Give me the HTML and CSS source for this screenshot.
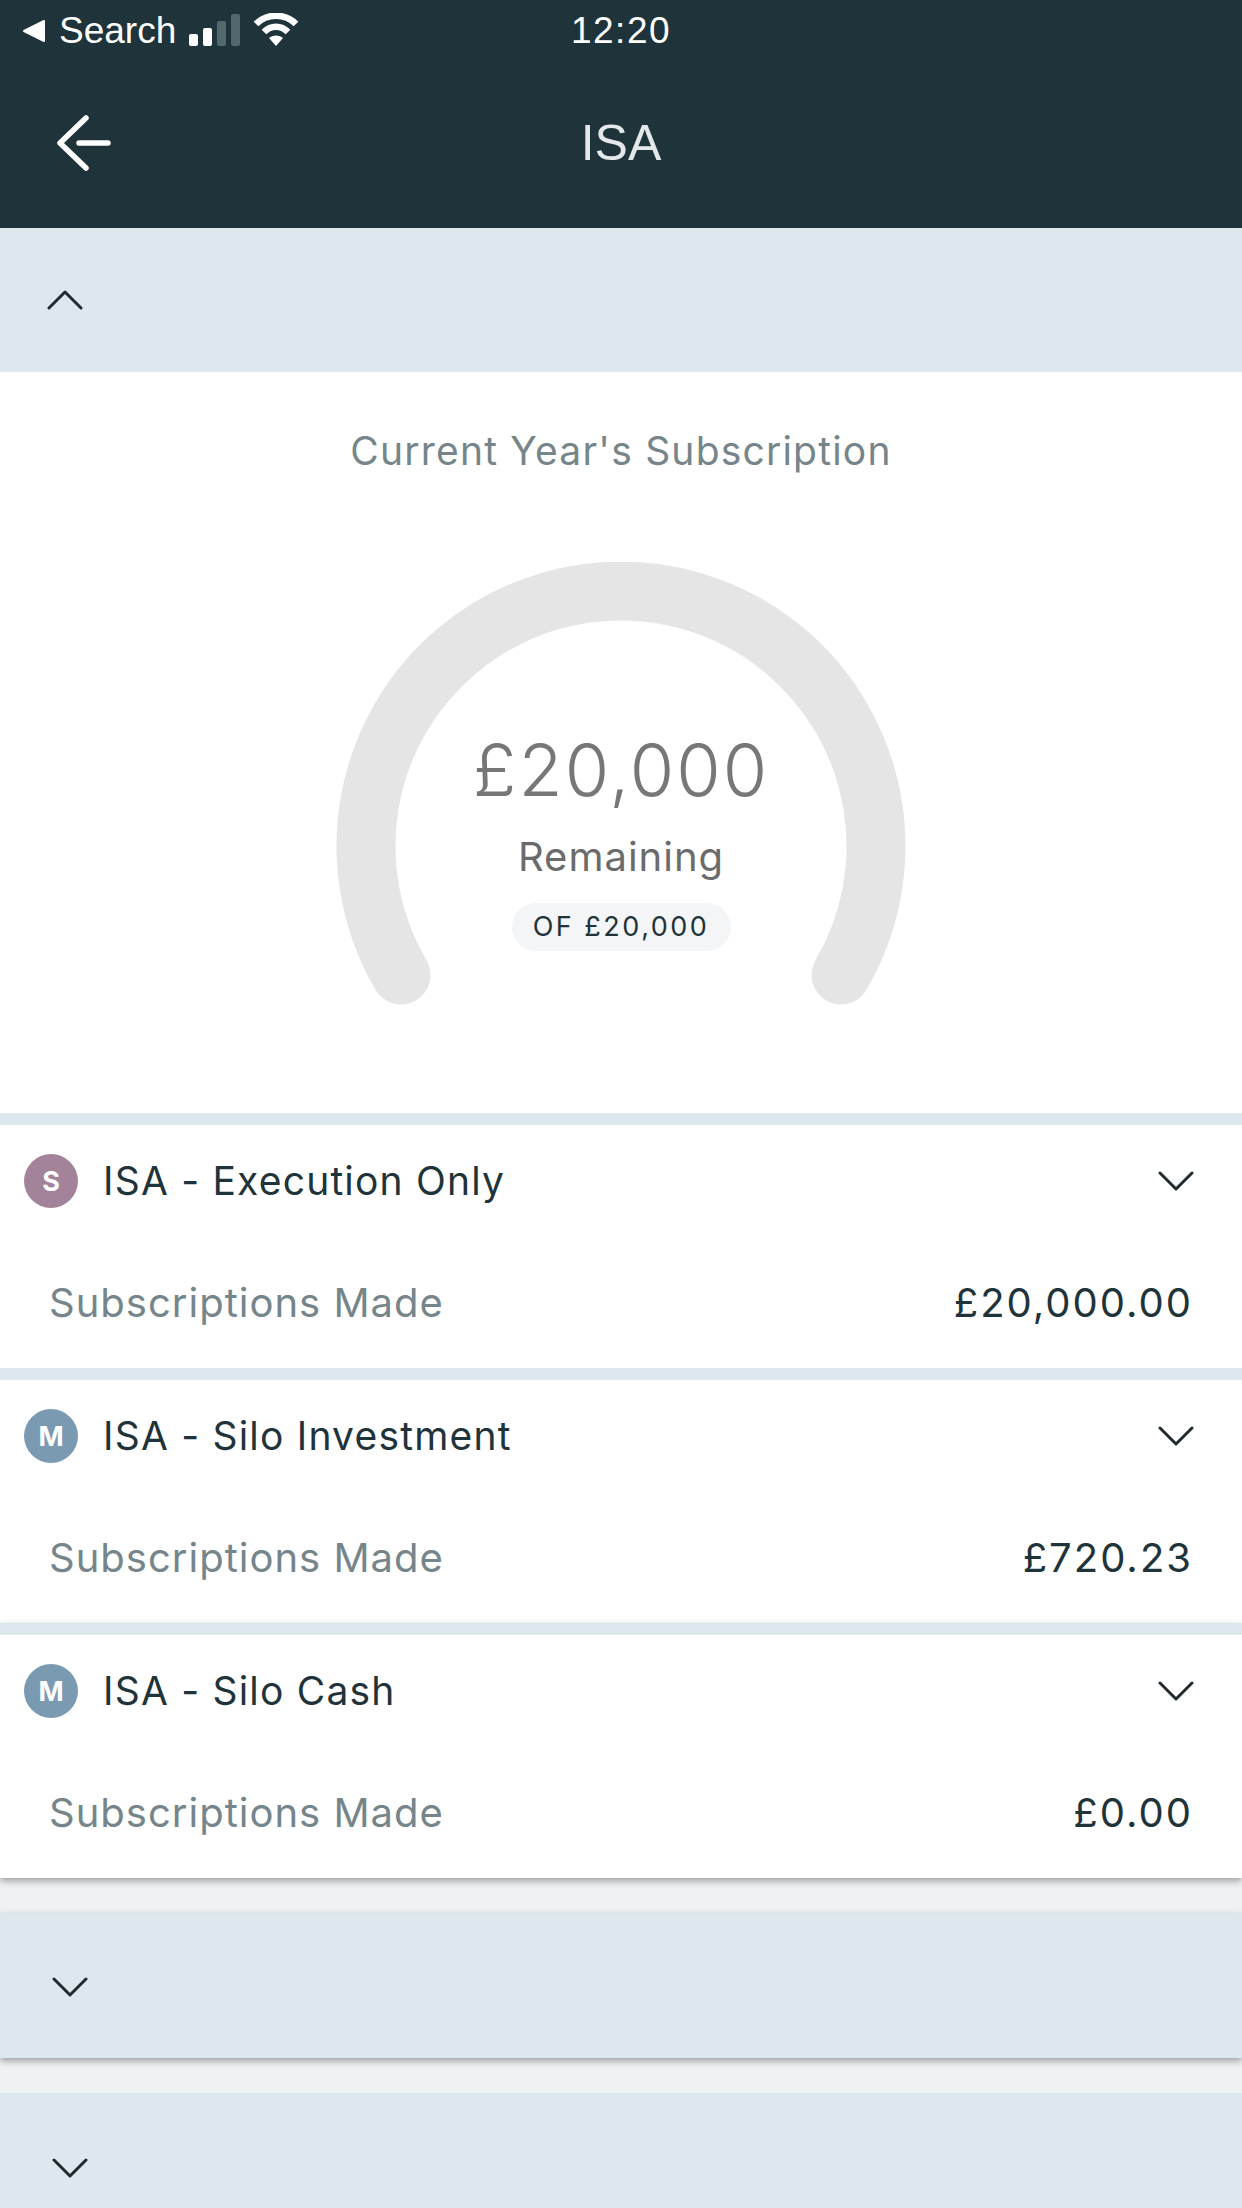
FILE: index.html
```html
<!DOCTYPE html>
<html lang="en">

<head>
    <meta charset="UTF-8">
    <meta name="viewport" content="width=device-width, initial-scale=1.0">
    <title>ISA</title>
    <link rel="stylesheet" href="styles.css">
</head>

<body>

    <header class="topBar">
        <div class="statusBar">
            <div class="statusLeft">
                <svg class="backTriangle" viewBox="0 0 24 24"><path d="M22 2 L22 22 L2 12 Z" fill="#fff" stroke="#fff" stroke-width="2" stroke-linejoin="round"/></svg>
                <span>Search</span>
                <svg class="signal" viewBox="0 0 51 32">
                    <rect x="0" y="20" width="9" height="12" rx="2" fill="#fff"/>
                    <rect x="14" y="14" width="9" height="18" rx="2" fill="#fff"/>
                    <rect x="28" y="7" width="9" height="25" rx="2" fill="#51686d"/>
                    <rect x="42" y="0" width="9" height="32" rx="2" fill="#51686d"/>
                </svg>
                <svg class="wifi" viewBox="0 0 46 34">
                    <path d="M3 11 C14 0 32 0 43 11" fill="none" stroke="#fff" stroke-width="6.5"/>
                    <path d="M11 19 C18 12 28 12 35 19" fill="none" stroke="#fff" stroke-width="6.5"/>
                    <path d="M16 25 C19.5 21.5 26.5 21.5 30 25 L23 33 Z" fill="#fff"/>
                </svg>
            </div>
            <div class="statusTime">12:20</div>
        </div>
        <div class="appBar">
            <svg class="backArrow" viewBox="0 0 54 56"><path d="M29 3 L3 28 L29 53 M22 28 L51 28" fill="none" stroke="#fff" stroke-width="5.5" stroke-linecap="round" stroke-linejoin="round"/></svg>
            <h1 class="appTitle">ISA</h1>
        </div>
    </header>

    <div class="foldBar foldBarTop">
        <svg class="chevron" viewBox="0 0 36 20"><path d="M2 18 L18 2 L34 18" fill="none" stroke="#1f2a2e" stroke-width="3" stroke-linecap="round" stroke-linejoin="round"/></svg>
    </div>

    <section class="gaugeCard">
        <h2 class="gaugeTitle">Current Year's Subscription</h2>
        <div class="gauge">
            <svg class="gaugeRing" viewBox="0 0 570 450">
                <path d="M65 413 A255 255 0 1 1 505 413" fill="none" stroke="#e5e5e5" stroke-width="59" stroke-linecap="round"/>
            </svg>
            <div class="gaugeText">
                <div class="gaugeAmount">£20,000</div>
                <div class="gaugeLabel">Remaining</div>
                <div class="gaugePill">OF £20,000</div>
            </div>
        </div>
    </section>

    <div class="account">
        <div class="accountHead">
            <span class="avatar avatarS">S</span>
            <span class="accountName">ISA - Execution Only</span>
            <svg class="chevron" viewBox="0 0 36 20"><path d="M2 2 L18 18 L34 2" fill="none" stroke="#1f2a2e" stroke-width="3" stroke-linecap="round" stroke-linejoin="round"/></svg>
        </div>
        <div class="accountRow">
            <span class="rowLabel">Subscriptions Made</span>
            <span class="rowValue">£20,000.00</span>
        </div>
    </div>

    <div class="account">
        <div class="accountHead">
            <span class="avatar avatarM">M</span>
            <span class="accountName">ISA - Silo Investment</span>
            <svg class="chevron" viewBox="0 0 36 20"><path d="M2 2 L18 18 L34 2" fill="none" stroke="#1f2a2e" stroke-width="3" stroke-linecap="round" stroke-linejoin="round"/></svg>
        </div>
        <div class="accountRow">
            <span class="rowLabel">Subscriptions Made</span>
            <span class="rowValue">£720.23</span>
        </div>
    </div>

    <div class="account accountLast">
        <div class="accountHead">
            <span class="avatar avatarM">M</span>
            <span class="accountName">ISA - Silo Cash</span>
            <svg class="chevron" viewBox="0 0 36 20"><path d="M2 2 L18 18 L34 2" fill="none" stroke="#1f2a2e" stroke-width="3" stroke-linecap="round" stroke-linejoin="round"/></svg>
        </div>
        <div class="accountRow">
            <span class="rowLabel">Subscriptions Made</span>
            <span class="rowValue">£0.00</span>
        </div>
    </div>

    <div class="foldBar foldBarShadow">
        <svg class="chevron" viewBox="0 0 36 20"><path d="M2 2 L18 18 L34 2" fill="none" stroke="#1f2a2e" stroke-width="3" stroke-linecap="round" stroke-linejoin="round"/></svg>
    </div>

    <div class="foldBar foldBarLast">
        <svg class="chevron" viewBox="0 0 36 20"><path d="M2 2 L18 18 L34 2" fill="none" stroke="#1f2a2e" stroke-width="3" stroke-linecap="round" stroke-linejoin="round"/></svg>
    </div>

</body>

</html>
```

FILE: styles.css
```css
* {
    box-sizing: border-box;
}

html,
body {
    margin: 0;
    padding: 0;
    height: 100%;
    overflow: hidden;
}

body {
    width: 1242px;
    height: 2208px;
    background-color: #eff2f5;
    font-family: Inter, "Liberation Sans", sans-serif;
    color: #1f343a;
    display: flex;
    flex-direction: column;
}

.topBar {
    height: 228px;
    background-color: #1f343a;
    color: #fff;
    flex-shrink: 0;
}

.statusBar {
    height: 62px;
    display: grid;
    grid-template-columns: 1fr auto 1fr;
    align-items: center;
    font-family: "Liberation Sans", sans-serif;
    font-size: 37px;
}

.statusLeft {
    display: flex;
    align-items: center;
    padding-left: 22px;
}

.backTriangle {
    width: 24px;
    height: 24px;
    margin-right: 13px;
}

.signal {
    width: 51px;
    height: 32px;
    margin-left: 13px;
    margin-bottom: 2px;
}

.wifi {
    width: 46px;
    height: 34px;
    margin-left: 13px;
    margin-bottom: 3px;
}

.statusTime {
    grid-column: 2;
    letter-spacing: 1.5px;
}

.appBar {
    height: 166px;
    display: grid;
    grid-template-columns: 1fr auto 1fr;
    align-items: center;
    padding-bottom: 4px;
}

.backArrow {
    width: 54px;
    height: 56px;
    margin-left: 57px;
}

.appTitle {
    margin: 0;
    font-family: "Liberation Sans", sans-serif;
    font-weight: 400;
    font-size: 50px;
    color: #e4e8ea;
}

.foldBar {
    height: 144px;
    flex-shrink: 0;
    background-color: #dde7ee;
    display: flex;
    align-items: center;
    padding-left: 52px;
}

.foldBarTop {
    padding-left: 47px;
}

.foldBarShadow {
    margin-top: 35px;
    height: 145px;
    padding-top: 3px;
    box-shadow: 0 3px 7px rgba(0, 0, 0, 0.35);
}

.foldBarLast {
    margin-top: 35px;
    flex-grow: 1;
    align-items: flex-start;
    padding-top: 65px;
}

.chevron {
    width: 36px;
    height: 20px;
    flex-shrink: 0;
}

.gaugeCard {
    height: 741px;
    flex-shrink: 0;
    background-color: #fff;
    display: flex;
    flex-direction: column;
    align-items: center;
    padding-top: 54px;
}

.gaugeTitle {
    margin: 0;
    font-weight: 400;
    font-size: 39px;
    line-height: 50px;
    letter-spacing: 1.2px;
    color: #75858a;
}

.gauge {
    position: relative;
    width: 570px;
    height: 450px;
    margin-top: 86px;
}

.gaugeRing {
    display: block;
    width: 570px;
    height: 450px;
}

.gaugeText {
    position: absolute;
    left: 0;
    right: 0;
    top: 164px;
    display: flex;
    flex-direction: column;
    align-items: center;
}

.gaugeAmount {
    font-weight: 300;
    font-size: 72px;
    line-height: 88px;
    letter-spacing: 2px;
    color: #777;
}

.gaugeLabel {
    font-size: 40px;
    line-height: 50px;
    margin-top: 18px;
    letter-spacing: 1px;
    color: #6b6b6b;
}

.gaugePill {
    margin-top: 21px;
    height: 48px;
    width: 219px;
    padding-bottom: 2px;
    display: flex;
    align-items: center;
    justify-content: center;
    border-radius: 24px;
    background-color: #f4f5f6;
    font-size: 27px;
    letter-spacing: 2.5px;
    color: #1f343a;
}

.account {
    height: 255px;
    flex-shrink: 0;
    background-color: #fff;
    border-top: 12px solid #dde7ee;
    display: flex;
    flex-direction: column;
}

.accountLast {
    box-shadow: 0 3px 7px rgba(0, 0, 0, 0.35);
}

.accountHead {
    height: 112px;
    display: flex;
    align-items: center;
    padding: 0 48px 0 24px;
}

.avatar {
    width: 54px;
    height: 54px;
    border-radius: 50%;
    display: flex;
    align-items: center;
    justify-content: center;
    color: #fff;
    font-size: 27px;
    font-weight: 700;
    flex-shrink: 0;
}

.avatarS {
    background-color: #a28399;
}

.avatarM {
    background-color: #7a9ab2;
}

.accountName {
    margin-left: 25px;
    margin-bottom: 2px;
    flex-grow: 1;
    font-size: 39px;
    letter-spacing: 1.2px;
}

.accountRow {
    height: 131px;
    display: flex;
    align-items: center;
    justify-content: space-between;
    padding: 0 49px 0 49px;
}

.rowLabel {
    font-size: 40px;
    letter-spacing: 1px;
    color: #75858a;
}

.rowValue {
    font-size: 40px;
    letter-spacing: 2px;
}
```
